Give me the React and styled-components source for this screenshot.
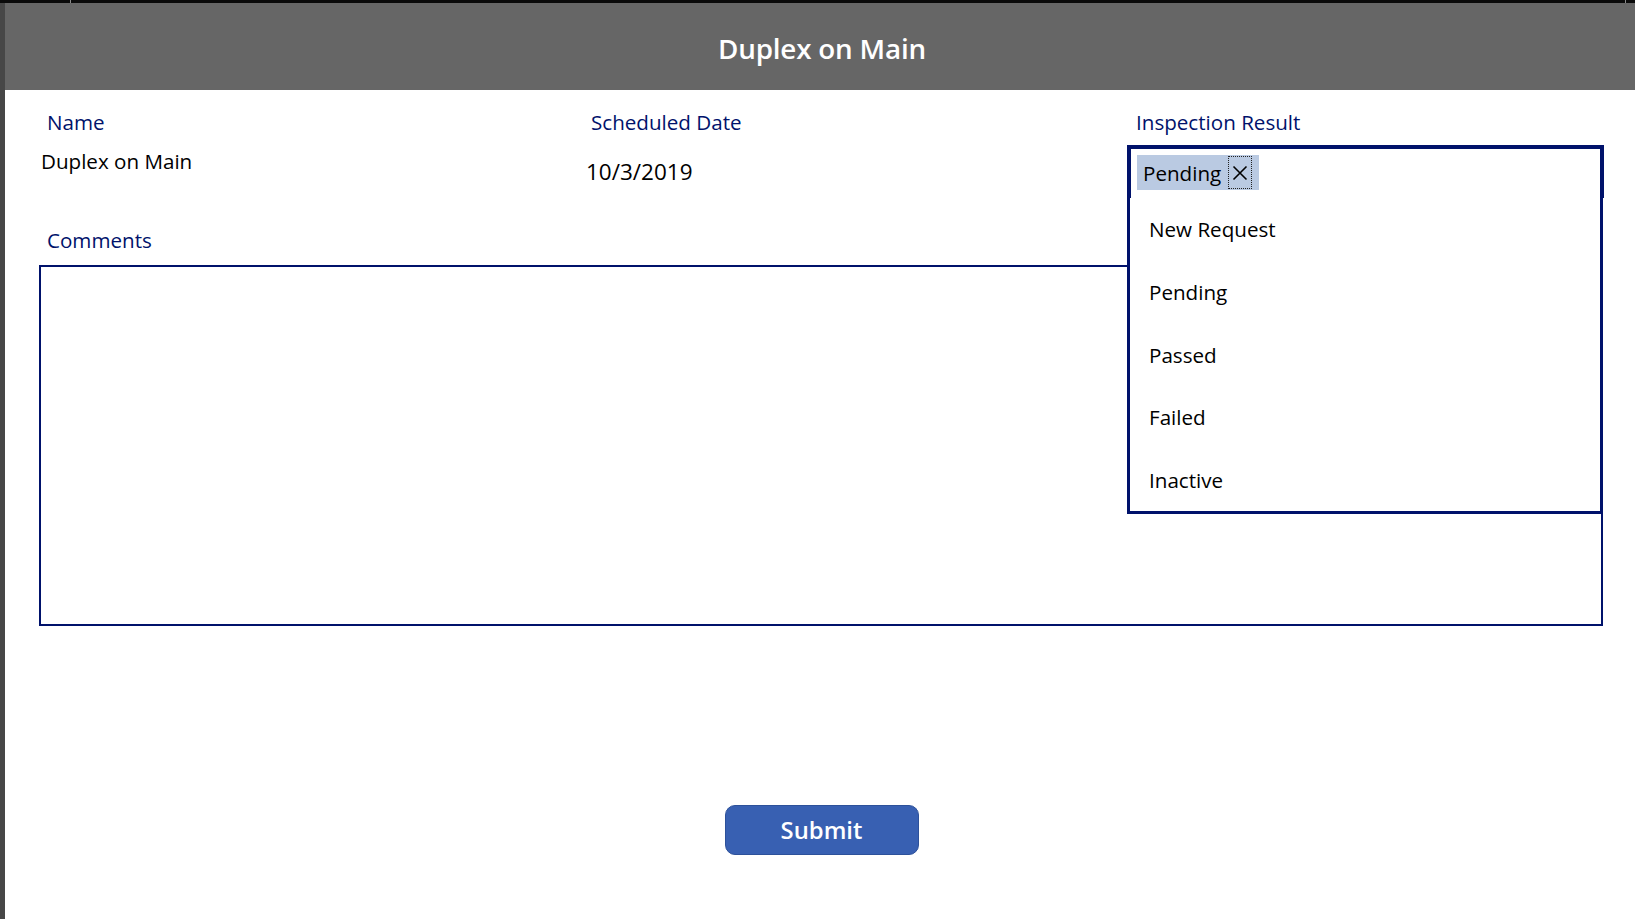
import React from 'react';
import styled, { createGlobalStyle } from 'styled-components';

const navy = "#00126b";
const font = `"Open Sans", "Noto Sans", "Liberation Sans", sans-serif`;

const GlobalStyle = createGlobalStyle`
  html, body {
    margin: 0;
    padding: 0;
    background: #ffffff;
    overflow: hidden;
  }
  body {
    font-family: ${font};
  }
`;

const Screen = styled.div`
  display: flex;
  flex-direction: column;
  width: 1635px;
  height: 919px;
`;

const TopBar = styled.div`
  display: flex;
  height: 3px;
  background: #0a0a0a;
  flex-shrink: 0;
`;

const Tick = styled.span`
  width: 1px;
  background: #8a8a8a;
  margin-left: ${(p) => p.$left || "0"};
  margin-right: ${(p) => p.$right || "0"};
`;

const Body = styled.div`
  display: flex;
  flex: 1;
`;

const SideStrip = styled.div`
  width: 5px;
  background: #474747;
  flex-shrink: 0;
`;

const Main = styled.div`
  display: flex;
  flex-direction: column;
  flex: 1;
`;

const Header = styled.header`
  height: 87px;
  background: #666666;
  display: flex;
  align-items: center;
  justify-content: center;
  padding-top: 3px;
  padding-left: 4px;
  box-sizing: border-box;
`;

const Title = styled.h1`
  margin: 0;
  color: #ffffff;
  font-family: ${font};
  font-weight: 600;
  font-size: 27.8px;
  letter-spacing: -0.2px;
`;

const Form = styled.div`
  display: flex;
  flex-direction: column;
  padding: 19px 31px 0 34px;
`;

const FieldRow = styled.div`
  display: grid;
  grid-template-columns: 545px 543px 477px;
`;

const Field = styled.div`
  display: flex;
  flex-direction: column;
  gap: 10px;
`;

const Label = styled.div`
  font-size: 20.6px;
  line-height: 26px;
  color: ${navy};
  padding-left: ${(p) => p.$indent || "8px"};
  margin-top: ${(p) => p.$top || "0"};
`;

const ValueBox = styled.div`
  height: 53px;
  display: flex;
  align-items: ${(p) => (p.$center ? "center" : "flex-start")};
  padding: ${(p) => (p.$center ? "0 2px" : "3px 2px 0")};
  box-sizing: border-box;
  font-size: ${(p) => p.$size || "20.6px"};
  line-height: 26px;
  color: #000000;
`;

const ComboWrap = styled.div`
  position: relative;
`;

const Combo = styled.div`
  height: 53px;
  box-sizing: border-box;
  border: 4px solid ${navy};
  border-bottom: none;
  padding: 6px 6px 0;
  display: flex;
  align-items: flex-start;
`;

const Chip = styled.div`
  display: flex;
  align-items: center;
  height: 35px;
  background: #bacae2;
  padding: 0 7px 0 6px;
  gap: 7px;
  font-size: 20.6px;
  color: #000000;
`;

const ChipClose = styled.span`
  width: 24px;
  height: 33px;
  box-sizing: border-box;
  border: 1px dotted #222222;
  display: flex;
  align-items: center;
  justify-content: center;
`;

const Menu = styled.ul`
  position: absolute;
  top: 100%;
  left: 0;
  right: 1px;
  margin: 0;
  padding: 0;
  list-style: none;
  background: #ffffff;
  border: 3px solid ${navy};
  border-top: none;
  z-index: 2;
`;

const MenuItem = styled.li`
  height: 62.7px;
  display: flex;
  align-items: center;
  padding-left: 19px;
  font-size: 20.6px;
  color: #000000;
`;

const Comments = styled.div`
  margin-top: 12px;
  height: 361px;
  width: 1564px;
  box-sizing: border-box;
  border: 2px solid ${navy};
`;

const ButtonRow = styled.div`
  display: flex;
  justify-content: center;
  margin-top: 179px;
`;

const SubmitButton = styled.button`
  width: 194px;
  height: 50px;
  border-radius: 10px;
  background: #3860b2;
  border: 1px solid #2d519a;
  color: #ffffff;
  font-family: ${font};
  font-weight: 600;
  font-size: 23.8px;
  cursor: pointer;
`;

const CloseIcon = () => (
  <svg width="16" height="16" viewBox="0 0 16 16">
    <path d="M1.5 1.5 L14.5 14.5 M14.5 1.5 L1.5 14.5" stroke="#000" strokeWidth="1.6" fill="none" />
  </svg>
);

const options = ["New Request", "Pending", "Passed", "Failed", "Inactive"];

const App = () => (
  <Screen>
    <GlobalStyle />
    <TopBar>
      <Tick $left="70px" />
      <Tick $left="auto" $right="9px" />
    </TopBar>
    <Body>
      <SideStrip />
      <Main>
        <Header>
          <Title>Duplex on Main</Title>
        </Header>
        <Form>
          <FieldRow>
            <Field>
              <Label>Name</Label>
              <ValueBox>Duplex on Main</ValueBox>
            </Field>
            <Field>
              <Label $indent="7px">Scheduled Date</Label>
              <ValueBox $center $size="22.5px">10/3/2019</ValueBox>
            </Field>
            <Field>
              <Label $indent="9px">Inspection Result</Label>
              <ComboWrap>
                <Combo>
                  <Chip>
                    Pending
                    <ChipClose>
                      <CloseIcon />
                    </ChipClose>
                  </Chip>
                </Combo>
                <Menu>
                  {options.map((o) => (
                    <MenuItem key={o}>{o}</MenuItem>
                  ))}
                </Menu>
              </ComboWrap>
            </Field>
          </FieldRow>
          <Label $top="29px">Comments</Label>
          <Comments />
          <ButtonRow>
            <SubmitButton>Submit</SubmitButton>
          </ButtonRow>
        </Form>
      </Main>
    </Body>
  </Screen>
);

export default App;
